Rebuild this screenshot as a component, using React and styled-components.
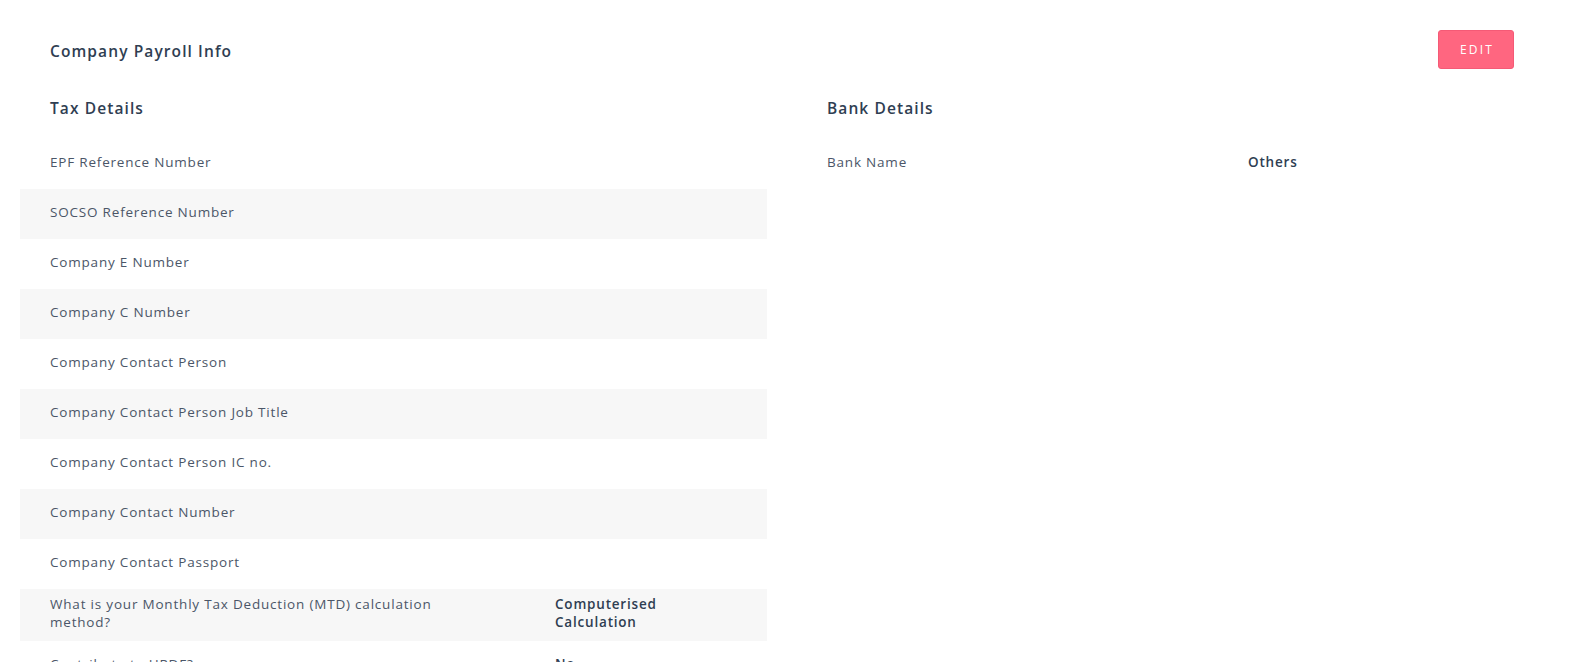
import React from 'react';
import styled, { createGlobalStyle } from 'styled-components';

const GlobalStyle = createGlobalStyle`
  html, body {
    margin: 0;
    padding: 0;
    background: #fff;
    font-family: "Open Sans", Lato, sans-serif;
    color: #34495e;
  }
`;

const taxRows = [
  { label: 'EPF Reference Number', value: '' },
  { label: 'SOCSO Reference Number', value: '' },
  { label: 'Company E Number', value: '' },
  { label: 'Company C Number', value: '' },
  { label: 'Company Contact Person', value: '' },
  { label: 'Company Contact Person Job Title', value: '' },
  { label: 'Company Contact Person IC no.', value: '' },
  { label: 'Company Contact Number', value: '' },
  { label: 'Company Contact Passport', value: '' },
  { label: 'What is your Monthly Tax Deduction (MTD) calculation method?', value: 'Computerised Calculation' },
  { label: 'Contribute to HRDF?', value: 'No' },
  { label: 'HRDF Number', value: '' },
];

const bankRows = [{ label: 'Bank Name', value: 'Others' }];

const Section = ({ title, rows, labelWidth }) => (
  <Column>
    <SectionTitle>{title}</SectionTitle>
    {rows.map((row, i) => (
      <Row key={row.label} $striped={i % 2 === 1} $labelWidth={labelWidth}>
        <Label>{row.label}</Label>
        <Value>{row.value}</Value>
      </Row>
    ))}
  </Column>
);

const App = () => {
  return (
    <>
      <GlobalStyle />
      <Page>
        <Header>
          <PageTitle>Company Payroll Info</PageTitle>
          <EditButton>EDIT</EditButton>
        </Header>
        <Columns>
          <Section title="Tax Details" rows={taxRows} labelWidth={475} />
          <Section title="Bank Details" rows={bankRows} labelWidth={391} />
        </Columns>
      </Page>
    </>
  );
};

export default App;

const Page = styled.div`
  height: 662px;
  overflow: hidden;
  padding-top: 30px;
  box-sizing: border-box;
`;

const Header = styled.div`
  display: flex;
  justify-content: space-between;
  align-items: center;
  height: 39px;
  padding: 0 56px 0 50px;
`;

const PageTitle = styled.h1`
  margin: 0;
  font-size: 15.5px;
  font-weight: 600;
  letter-spacing: 1.1px;
  color: #2f3e52;
  padding-top: 2px;
`;

const EditButton = styled.button`
  width: 76px;
  height: 39px;
  border: 1px solid #f55a76;
  border-radius: 3px;
  background: #ff6680;
  color: #fff;
  font-family: "Open Sans", Lato, sans-serif;
  font-size: 12px;
  letter-spacing: 2.2px;
  padding: 0 0 0 2px;
  cursor: pointer;
`;

const Columns = styled.div`
  display: grid;
  grid-template-columns: 747px 747px;
  column-gap: 30px;
  padding: 0 20px;
  margin-top: 14px;
  align-items: start;
`;

const Column = styled.div`
  display: flex;
  flex-direction: column;
`;

const SectionTitle = styled.h2`
  margin: 0 0 6px;
  padding: 0 30px;
  height: 50px;
  line-height: 50px;
  font-size: 15.5px;
  font-weight: 600;
  letter-spacing: 1.1px;
  color: #2f3e52;
`;

const Row = styled.div`
  display: grid;
  grid-template-columns: ${(p) => p.$labelWidth}px 160px;
  column-gap: 30px;
  align-items: center;
  min-height: 50px;
  box-sizing: border-box;
  padding: 6px 30px 10px;
  line-height: 18px;
  background: ${(p) => (p.$striped ? '#f7f7f7' : 'transparent')};
`;

const Label = styled.div`
  font-size: 13.5px;
  letter-spacing: 0.8px;
  color: #4b5668;
  max-width: 420px;
`;

const Value = styled.div`
  font-size: 13.5px;
  font-weight: 600;
  letter-spacing: 0.8px;
  color: #2f3e52;
  max-width: 120px;
`;
